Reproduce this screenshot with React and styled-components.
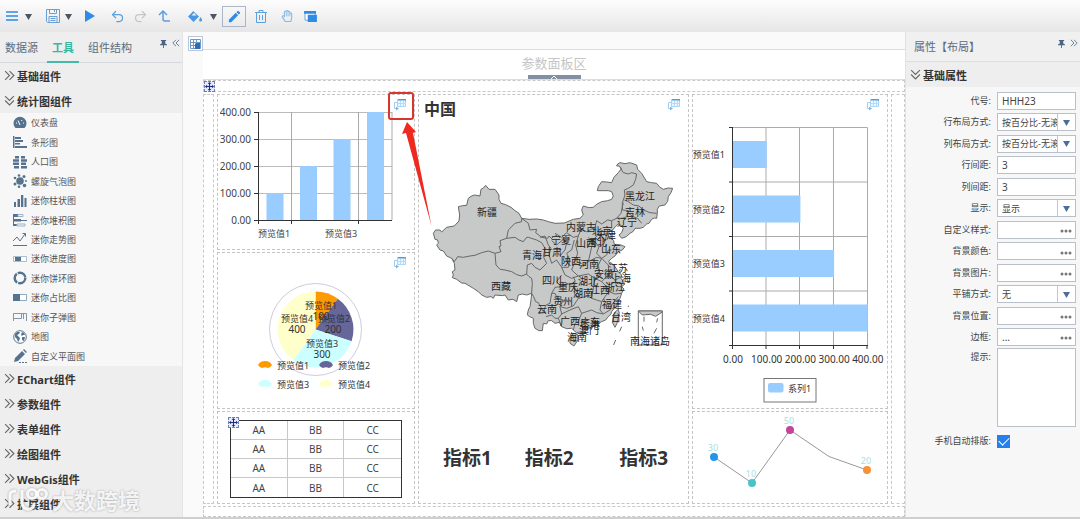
import React, { useState } from "react";
import styled, { createGlobalStyle } from "styled-components";
import { Undo2, Redo2 } from "lucide-react";
import { FaRegHandPaper } from "react-icons/fa";
import { MdEdit } from "react-icons/md";

const GlobalStyle = createGlobalStyle`
  * {
    box-sizing: border-box;
  }
  body {
    margin: 0;
    color: #444;
    background: #f7f7f7;
    font-family: "Noto Sans", "Noto Sans CJK SC", sans-serif;
    font-size: 9px;
  }
  button, input, select, textarea {
    font: inherit;
    color: inherit;
  }
`;

const Page = styled.div`
  position: relative;
  display: flex;
  flex-direction: column;
  min-height: 100vh;
  overflow: hidden;
`;

const Toolbar = styled.header`
  display: flex;
  align-items: center;
  height: 32px;
  padding-left: 3px;
  background: linear-gradient(#fdfdfd, #e6e6e6);
`;

const ToolButton = styled.button`
  display: flex;
  align-items: center;
  justify-content: center;
  width: ${(p) => (p.$boxed ? 24 : p.$caret ? 12 : 18)}px;
  height: 21px;
  margin-left: ${(p) => p.$gap || 0}px;
  padding: 0;
  border: ${(p) => (p.$boxed ? "1px solid #aab6c8" : "none")};
  background: none;
  color: ${(p) => p.$color || "#2f8be6"};
  cursor: pointer;
`;

const Body = styled.div`
  flex: 1;
  display: grid;
  grid-template-columns: 182px 21px minmax(0, 1fr) 175px;
  border-bottom: 2px solid #cfcfcf;
`;

const Sidebar = styled.aside`
  display: flex;
  flex-direction: column;
  height: 485px;
  overflow: hidden;
  background: #eee;
`;

const TabBar = styled.nav`
  display: flex;
  gap: 4px;
  height: 31px;
  flex: none;
  border-bottom: 1px solid #d6dade;
`;

const Tab = styled.button`
  height: 31px;
  padding: 0 5px;
  border: none;
  border-bottom: 2px solid ${(p) => (p.$active ? "#45b9a8" : "transparent")};
  background: none;
  color: ${(p) => (p.$active ? "#36b8a3" : "#5d6b7c")};
  font-size: 11px;
  font-weight: ${(p) => (p.$active ? 700 : 400)};
  cursor: pointer;
`;

const PanelTools = styled.div`
  display: flex;
  align-items: center;
  gap: 5px;
  height: 22px;
  margin-left: auto;
  padding-right: 2px;
  color: #4c6484;
`;

const SectionHead = styled.button`
  display: flex;
  align-items: center;
  gap: 2px;
  flex: none;
  width: 100%;
  height: 25px;
  padding: 0 4px;
  border: none;
  background: #eee;
  color: #333;
  font-size: 11px;
  font-weight: 700;
  text-align: left;
  cursor: pointer;
`;

const ToolList = styled.ul`
  display: grid;
  grid-auto-rows: 1fr;
  flex: none;
  height: 253px;
  margin: 0;
  padding: 0;
  list-style: none;
  background: #f7f7f7;
`;

const ToolItem = styled.li`
  display: flex;
  align-items: center;
  gap: 4px;
  padding-left: 13px;
  color: #555;

  svg {
    color: #55738f;
  }
`;

const Gutter = styled.div`
  display: flex;
  justify-content: flex-end;
  align-items: flex-start;
  padding-top: 4px;
  border-left: 1px solid #e4e4e4;
  background: #fafafa;
`;

const GutterButton = styled.button`
  display: flex;
  align-items: center;
  justify-content: center;
  width: 15px;
  height: 15px;
  padding: 0;
  border: 1px solid #bcc6d6;
  background: #fff;
`;

const Workspace = styled.main`
  display: flex;
  flex-direction: column;
  background: #fff;
`;

const Ruler = styled.div`
  height: 18px;
  border-bottom: 1px solid #ddd;
  background: #fafafa;
`;

const ParamArea = styled.div`
  display: flex;
  flex-direction: column;
  align-items: center;
  justify-content: space-between;
  height: 30px;
  padding-top: 4px;
  border-bottom: 1px solid #ddd;
  color: #c6c6c6;
  font-size: 13px;
  line-height: 18px;
`;

const Handle = styled.button`
  display: flex;
  align-items: center;
  justify-content: center;
  width: 53px;
  height: 4px;
  padding: 0;
  border: none;
  background: #8290a2;
`;

const Canvas = styled.div`
  flex: 1;
  display: grid;
  grid-template-columns: 11px 198fr 271fr 196fr 14px;
  grid-template-rows: 12px auto 11px;
  gap: 2px 3px;
`;

const Slot = styled.div`
  border: 1px dashed #c9c9c9;
  grid-column: ${(p) => (p.$full ? "1 / -1" : "auto")};
`;

const Column = styled.div`
  display: flex;
  flex-direction: column;
  gap: 2px;
  min-width: 0;
`;

const Cell = styled.section`
  position: relative;
  padding: ${(p) => p.$pad || 0}px;
  border: 1px dashed #c4c4c4;
  flex: ${(p) => (p.$grow ? 1 : "none")};
`;

const Chart = styled.svg`
  display: block;
  width: 100%;
  height: auto;
`;

const LinkButton = styled.button`
  position: absolute;
  top: 3px;
  right: ${(p) => p.$right || 6}px;
  width: 15px;
  height: 13px;
  padding: 0;
  border: none;
  background: none;
`;

const MoveGrip = styled.span`
  position: absolute;
  display: flex;
  top: ${(p) => p.$top}px;
  left: ${(p) => p.$left}px;
  border: 1px dashed #6b82b8;
  background: #e6ecfa;
`;

const CanvasHead = styled(Slot)`
  position: relative;
`;

const MapTitle = styled.h2`
  margin: 0;
  padding: 0 5px;
  height: 29px;
  color: #333;
  font-size: 16px;
  line-height: 28px;
`;

const Indicators = styled.div`
  display: grid;
  grid-template-columns: 82fr 95fr 69fr;
  padding-left: 24px;
  color: #333;
  font-size: 19px;
  font-weight: 700;
  line-height: 48px;
`;

const DataTable = styled.table`
  width: 172px;
  margin: 8px 0 5px 12px;
  border: 1px solid #333;
  border-spacing: 0;
  color: #444;
  font-size: 10px;

  td {
    width: 57px;
    height: 19px;
    padding: 0;
    border-right: 1px solid #c8c8c8;
    border-bottom: 1px solid #c8c8c8;
    line-height: 14px;
    text-align: center;
  }
  td:last-child {
    border-right: none;
  }
  tr:last-child td {
    border-bottom: none;
  }
`;

const Properties = styled.aside`
  border-left: 1px solid #e2e2e2;
  background: #f7f7f7;
`;

const PropTitle = styled.div`
  display: flex;
  height: 30px;
  padding-left: 8px;
  border-bottom: 1px solid #ddd;
  background: #f0f0f0;
  color: #5d6b7c;
  font-size: 11px;
  line-height: 30px;
`;

const Form = styled.form`
  padding: 5px 4px 0 0;
`;

const Fields = styled.div`
  display: flex;
  flex-direction: column;
  justify-content: space-between;
  height: 254px;
`;

const FieldRow = styled.div`
  display: grid;
  grid-template-columns: 1fr 79px;
  column-gap: 6px;
  margin-top: ${(p) => p.$gap || 0}px;

  > label {
    color: #444;
    line-height: 18px;
    text-align: right;
  }
`;

const Box = styled.div`
  display: flex;
  height: 18px;
  border: 1px solid #b9c0ca;
  background: #fff;
`;

const TextInput = styled.input`
  flex: 1;
  min-width: 0;
  padding: 0 4px;
  border: none;
  outline: none;
  background: none;
  font-size: 10px;
`;

const Picker = styled.select`
  flex: 1;
  min-width: 0;
  padding: 0 0 0 4px;
  border: none;
  outline: none;
  appearance: none;
  background: none;
`;

const Arrow = styled.span`
  display: flex;
  align-items: center;
  justify-content: center;
  width: 18px;
  border-left: 1px solid #b9c9de;
  color: #4a6f9d;
`;

const MoreButton = styled.button`
  width: 19px;
  padding: 0;
  border: none;
  background: none;
  color: #777;
`;

const Hint = styled.textarea`
  width: 79px;
  height: 79px;
  border: 1px solid #b9c0ca;
  background: #fff;
  resize: none;
`;

const Check = styled.input`
  display: grid;
  place-items: center;
  width: 13px;
  height: 13px;
  margin: 3px 0;
  appearance: none;
  border: 1px solid #2680eb;
  background: #fff;

  &:checked {
    background: #2680eb;
  }
  &:checked::after {
    content: "";
    width: 9px;
    height: 5px;
    margin-bottom: 3px;
    border: solid #fff;
    border-width: 0 0 1px 1px;
    transform: rotate(-45deg);
  }
`;

const Callout = styled.svg`
  position: absolute;
  top: -5px;
  right: -20px;
  width: 48px;
  height: 138px;
  z-index: 2;
  pointer-events: none;
`;

const Watermark = styled.div`
  position: absolute;
  bottom: 4px;
  left: 8px;
  display: flex;
  align-items: center;
  gap: 4px;
  color: rgba(255, 255, 255, 0.9);
  font-size: 22px;
  font-weight: 700;
  line-height: 30px;
  text-shadow: 0 0 2px #999;

  svg {
    filter: drop-shadow(0 0 1px #999);
  }
`;

const Caret = ({ size = 8 }) => (
  <svg width={size} height={size} viewBox="0 0 8 8">
    <path d="M0 1h8L4 8z" fill="currentColor" />
  </svg>
);

const Double = ({ dir = "right", size = 11, color = "#666" }) => {
  const turn = { right: 0, down: 90, left: 180 }[dir];
  return (
    <svg width={size} height={size} viewBox="0 0 10 10">
      <path
        d="M1 1l4 4-4 4M5 1l4 4-4 4"
        transform={`rotate(${turn} 5 5)`}
        fill="none"
        stroke={color}
      />
    </svg>
  );
};

const Pin = () => (
  <svg width="7" height="9" viewBox="0 0 8 10" fill="currentColor">
    <path d="M1 1h6v1H6v3l2 1v1H4.500v3h-1V7H0V6l2-1V2H1z" />
  </svg>
);

const Grip = () => (
  <svg width="9" height="9" viewBox="0 0 10 10" fill="#1b2f86">
    <path d="M5 0l2 2.300H5.600v2.100h2.100V3L10 5 7.700 7V5.600H5.600v2.100H7L5 10 3 7.700h1.400V5.600H2.300V7L0 5l2.300-2v1.400h2.100V2.300H3z" />
  </svg>
);

const LinkIcon = () => (
  <svg width="15" height="13" viewBox="0 0 15 13">
    <path d="M4.500 1.500h8v7h-8z" fill="#eef7ff" stroke="#a9d2f3" />
    <path d="M5 1h8v1.500H5z" fill="#4a9de0" />
    <path d="M5 5.500h8M7.500 3v6M10.500 3v6" stroke="#b5dbf7" />
    <path d="M4 4.500H1.500v6H4" fill="none" stroke="#a2cdf0" />
    <path d="M3 8.500l3 2-3 2z" fill="#7ab8e8" />
  </svg>
);

// sidebar glyphs share a 14x14 box
const glyphs = {
  gauge: (
    <>
      <path d="M2.500 12a6.500 6.500 0 1 1 9 0z" fill="currentColor" />
      <path d="M7 9L5 4.500M3 7h1M10 7h1M9 4l-.5 1" stroke="#fff" />
    </>
  ),
  bars: (
    <path
      d="M0 1h1.500v12H0zM2 2h6v2H2zM2 5h8v2H2zM2 8h5v1.500H2zM2 11h12v2H2z"
      fill="currentColor"
    />
  ),
  people: (
    <path
      d="M2 1h4v2.500H2zM8 1h4v2.500H8zM0 4.300h6v2.500H0zM8 4.300h6v2.500H8zM0 7.600h6V10H0zM8 7.600h5V10H8zM1 11h5v2.500H1zM8 11h6v2.500H8z"
      fill="currentColor"
    />
  ),
  bubble: (
    <g fill="currentColor">
      <circle cx="7" cy="7" r="3.800" />
      <circle cx="2" cy="4" r="1.300" />
      <circle cx="6" cy="1.500" r="1.300" />
      <circle cx="11" cy="2.500" r="1.500" />
      <circle cx="13" cy="7" r="1" />
      <circle cx="11.500" cy="11.500" r="1.800" />
      <circle cx="6" cy="12.700" r="1.300" />
      <circle cx="2" cy="10" r="1.500" />
    </g>
  ),
  columns: (
    <path
      d="M1 8h2v5H1zM4.500 5H7v8H4.500zM8 1h2.300v12H8zM11.500 4h2v9h-2z"
      fill="currentColor"
    />
  ),
  stack: (
    <>
      <path d="M0 1h1v12H0zM1 1h4v3H1zM1 6h7v2.500H1zM1 11h3v2H1zM8 7h6v1H8z" fill="currentColor" />
      <path d="M5 1.500h5v2H5zM4 11h8v2H4z" fill="none" stroke="#9db3c7" />
    </>
  ),
  trend: (
    <path
      d="M0 9l4-4 3 4 5-7M9.500 1.500h3v3M0 13.500h14"
      fill="none"
      stroke="currentColor"
    />
  ),
  progress: (
    <>
      <path d="M.5 4.500h13v5H.5z" fill="#fff" stroke="#a8bdd0" />
      <path d="M2 5h6v4H2z" fill="currentColor" />
    </>
  ),
  ring: (
    <circle cx="7" cy="7" r="5.300" fill="none" stroke="currentColor" strokeWidth="2.400" strokeDasharray="10 1" />
  ),
  ratio: (
    <>
      <path d="M.5 3.500h13v6H.5z" fill="#fff" stroke="#8fa9c0" />
      <path d="M0 3h7v7H0z" fill="currentColor" />
    </>
  ),
  bullet: (
    <path
      d="M.5 11V3.500h13V11M.5 8.500h8M8.500 3.500v5M10.500 4v5"
      fill="none"
      stroke="#8097ad"
    />
  ),
  globe: (
    <>
      <circle cx="7" cy="7" r="6.300" fill="#fff" stroke="currentColor" />
      <path d="M2 4l2-2 3 0-1 2-2 1 2 2 1 1-1 3-1 1-1-3-2-2zM9 2l2 1 1 2-2 0-1 1-1-1zM9 7l3 0-1 4-2-1z" fill="currentColor" />
    </>
  ),
  draw: (
    <>
      <path d="M2 9l7-7 3 3-7 7-4 1zM10 1l1-1 3 3-1 1z" fill="currentColor" />
      <path d="M6 13.500h8" stroke="currentColor" strokeDasharray="2 1" />
    </>
  ),
};

const tools = [
  ["gauge", "仪表盘"],
  ["bars", "条形图"],
  ["people", "人口图"],
  ["bubble", "螺旋气泡图"],
  ["columns", "迷你柱状图"],
  ["stack", "迷你堆积图"],
  ["trend", "迷你走势图"],
  ["progress", "迷你进度图"],
  ["ring", "迷你饼环图"],
  ["ratio", "迷你占比图"],
  ["bullet", "迷你子弹图"],
  ["globe", "地图"],
  ["draw", "自定义平面图"],
];

const closedSections = [
  "EChart组件",
  "参数组件",
  "表单组件",
  "绘图组件",
  "WebGis组件",
  "扩展组件",
];

const fields = [
  { id: "code", label: "代号", type: "text", value: "HHH23" },
  { id: "rowLayout", label: "行布局方式", type: "select", value: "按百分比-无滚动" },
  { id: "colLayout", label: "列布局方式", type: "select", value: "按百分比-无滚动" },
  { id: "rowGap", label: "行间距", type: "text", value: "3" },
  { id: "colGap", label: "列间距", type: "text", value: "3" },
  { id: "display", label: "显示", type: "select", value: "显示" },
  { id: "style", label: "自定义样式", type: "more", value: "" },
  { id: "bgColor", label: "背景颜色", type: "more", value: "" },
  { id: "bgImage", label: "背景图片", type: "more", value: "" },
  { id: "tile", label: "平铺方式", type: "select", value: "无" },
  { id: "bgPos", label: "背景位置", type: "more", value: "" },
  { id: "border", label: "边框", type: "more", value: "..." },
];

const ColumnChart = () => (
  <Chart viewBox="220 97 192 150" fontSize="10" fill="#444">
    {[0, 1, 2, 3, 4].map((i) => (
      <g key={i}>
        <path d={`M258 ${220.5 - i * 27}H392`} stroke="#bbb" />
        <path d={`M254 ${220.5 - i * 27}h4`} stroke="#333" />
        <text x="251" y={224 - i * 27} textAnchor="end">
          {i * 100}.00
        </text>
      </g>
    ))}
    <path d="M291.500 112v108M358.500 112v108M392 112v108" stroke="#aaa" />
    {[1, 2, 3, 4].map((v, i) => (
      <rect key={v} x={266.5 + i * 33.5} y={220 - v * 27} width="17" height={v * 27} fill="#9cf" />
    ))}
    <path d="M258.500 112v112M258 220.500h134M291.500 220v4M358.500 220v4" stroke="#333" fill="none" />
    <g fontSize="9" textAnchor="middle">
      <text x="274" y="237">预览值1</text>
      <text x="341" y="237">预览值3</text>
    </g>
  </Chart>
);

const legendItems = [
  ["预览值1", "#f90", 265, 365],
  ["预览值2", "#669", 326, 365],
  ["预览值3", "#cff", 265, 384],
  ["预览值4", "#ffc", 326, 384],
];

const PieChart = () => (
  <Chart viewBox="220 255 192 151" fontSize="9" fill="#333">
    <circle cx="315.500" cy="329.500" r="46" fill="#fff" stroke="#ccd" />
    <path d="M315.500 329.500V291.500A38 38 0 0 1 337.800 298.800z" fill="#f90" />
    <path d="M315.500 329.500L337.800 298.800A38 38 0 0 1 351.600 341.200z" fill="#669" />
    <path d="M315.500 329.500L351.600 341.200A38 38 0 0 1 293.200 360.200z" fill="#cff" />
    <path d="M315.500 329.500L293.200 360.200A38 38 0 0 1 315.500 291.500z" fill="#ffc" />
    <g textAnchor="middle">
      <text x="321" y="309">预览值1</text>
      <text x="321" y="320" fontSize="10">100</text>
      <text x="334" y="322">预览值2</text>
      <text x="333" y="333" fontSize="10">200</text>
      <text x="322" y="347">预览值3</text>
      <text x="322" y="358" fontSize="10">300</text>
      <text x="297" y="322">预览值4</text>
      <text x="297" y="333" fontSize="10">400</text>
    </g>
    {legendItems.map(([label, color, x, y]) => (
      <g key={label}>
        <path
          d={`M${x - 7} ${y}q2-4 7-4t7 4q-2 3-4 3-3-1.500-6 0-2 0-4-3z`}
          fill={color}
        />
        <text x={x + 12} y={y + 4}>{label}</text>
      </g>
    ))}
  </Chart>
);

const BarChart = () => (
  <Chart viewBox="693 95 194 313" fontSize="9" fill="#333">
    <path d="M732 127.500h135.500V345M732 182h135M732 236.500h135M732 291h135M766 127v218M799.500 127v218M833.500 127v218" stroke="#aaa" fill="none" />
    {[1, 2, 3, 4].map((v, i) => (
      <g key={v}>
        <rect x="733" y={141 + i * 54.5} width={v * 33.7} height="27" fill="#9cf" />
        <text x="725" y={158 + i * 54.5} textAnchor="end">预览值{v}</text>
      </g>
    ))}
    <path d="M732.500 127v222M729 345.500h139M729 127.500h3M729 182h3M729 236.500h3M729 291h3M766 345v4M799.500 345v4M833.500 345v4M867 345v4" stroke="#333" fill="none" />
    {[0, 1, 2, 3, 4].map((v) => (
      <text key={v} x={733 + v * 33.7} y="363" textAnchor="middle" fontSize="10">
        {v * 100}.00
      </text>
    ))}
    <rect x="764" y="378.500" width="52" height="23.500" fill="#fff" stroke="#777" />
    <rect x="768" y="383" width="15.500" height="9.500" rx="2" fill="#9cf" />
    <text x="788" y="392">系列1</text>
  </Chart>
);

const points = [
  [714, 457, 30, "#2196e8"],
  [752, 483, 10, "#48c3c8"],
  [790, 430, 50, "#c4449c"],
  [867, 470, 20, "#f5923a"],
];

const LineChart = () => (
  <Chart viewBox="693 412 194 88" fontSize="9" textAnchor="middle">
    <path d="M714 457L752 483 790 430 829 456.500 867 470" fill="none" stroke="#999" />
    {points.map(([x, y, v, color]) => (
      <g key={v}>
        <circle cx={x} cy={y} r="4" fill={color} />
        <text x={x - 1} y={y - 6} fill="#a5dfe6">{v}</text>
      </g>
    ))}
  </Chart>
);

// outline and borders are drawn at three times the label coordinates
const country =
  "M55 250L62 240 75 240 80 246 95 232 118 228 132 213 134 195 130 170 143 167 155 166 160 145 168 139 178 135 195 138 198 118 205 114 212 106 222 118 240 118 252 135 252 148 258 160 272 164 288 172 300 182 312 190 320 205 342 208 365 207 385 210 400 215 420 220 448 219 475 208 495 205 505 195 500 180 505 168 522 173 535 172 545 163 560 155 578 152 590 148 595 138 590 125 580 122 547 122 550 110 560 95 575 96 590 98 597 82 610 68 620 55 612 48 605 48 608 42 615 38 630 41 645 38 665 45 668 58 680 70 695 95 710 98 725 100 733 110 745 118 760 114 773 115 768 128 760 140 758 154 750 165 733 168 727 178 727 190 725 205 718 204 710 208 702 220 695 222 685 232 675 235 660 235 655 244 645 250 634 260 620 265 612 255 620 248 625 235 618 226 610 222 602 229 593 240 585 243 580 250 582 262 590 265 596 272 598 284 606 283 618 285 630 290 622 300 610 305 600 318 590 325 580 335 592 341 600 350 610 365 620 375 618 385 625 395 630 402 620 410 627 417 620 430 615 445 608 458 605 470 598 475 590 485 587 494 580 500 572 510 560 515 540 525 530 532 520 535 510 545 500 545 484 548 470 535 455 536 440 530 433 517 420 520 410 512 400 512 395 522 385 520 382 542 372 542 360 535 355 520 355 505 344 500 337 495 340 480 345 470 348 450 350 430 335 435 322 432 310 435 305 455 294 448 280 450 270 435 262 437 240 435 235 445 228 440 215 442 200 435 190 425 175 415 150 400 140 399 125 388 112 383 115 375 112 365 120 360 118 340 110 325 95 318 85 303 75 300 65 285 70 280 68 270 60 268z";

const borders = [
  "M110 325L118 335 128 320 145 322 165 318 180 316 200 308 220 303 240 310",
  "M240 310L243 345 255 358 270 360 290 365 305 374 320 378 335 372 342 380 350 385 352 400 350 430",
  "M240 310L258 305 252 290 258 288 255 272 275 265 280 240 300 220 320 215 320 205 340 220 345 240 365 238 362 248 380 262 398 265 402 258 412 268",
  "M275 265L300 262 312 270 325 275 335 262 340 262 365 270 380 278 390 295 385 320 395 340 375 360 360 352 350 340 337 345 335 372",
  "M350 430L356 440 362 455 370 458 385 485 393 465 405 460 410 430 420 430 432 455 445 450",
  "M375 262L390 258 400 285 408 295 402 315 410 340 425 330 440 352 460 352 465 330 455 310 470 300 478 270",
  "M410 272L425 285 445 268 455 278 450 300 435 318M420 250L440 262 455 248 475 262 490 258 498 238 515 245 540 232",
  "M490 258L482 285 488 310 478 340 500 348 520 335 528 300 535 270 548 255",
  "M520 335L545 322 560 325 575 315 580 300 590 300M535 270L552 290 545 310 560 325",
  "M540 232L545 212 560 222 578 210 590 212 590 235M548 255L560 240 575 255 568 280 552 290",
  "M478 340L470 360 490 378 520 372 540 385 555 372 550 345 560 325M560 325L580 345 582 375 600 390 620 380",
  "M440 352L450 375 470 385 490 378M440 375L425 395 440 410 455 400 470 405 480 392 475 380",
  "M480 392L478 430 490 445 520 438 530 445 540 385M540 385L560 395 572 382 582 375M560 395L575 410 582 425 570 440 560 455 545 450 530 445",
  "M445 450L435 470 455 475 475 468 490 445M410 430L420 412 440 410M435 470L440 492 430 505 440 530",
  "M440 492L465 480 490 470 500 490 490 515 480 520 475 540M500 490L530 480 545 488 565 492 585 480 590 465 610 440",
  "M565 492L555 480 560 455M582 425L600 432 620 430M600 390L605 410 620 410M393 500L410 495 420 505 430 505",
  "M615 52L625 68 640 72 650 68 665 72 662 88 655 105 640 115 628 120 630 135 625 150 622 158 622 180 640 182 640 190 655 200 668 205 680 220",
  "M628 150L640 155 655 165 672 168 685 180 705 188 725 190M590 212L605 205 622 205 635 200 640 182M625 158L618 190 605 205",
];

const provinces = [
  ["新疆", 487, 213], ["西藏", 501, 287], ["青海", 532, 256], ["四川", 552, 281],
  ["云南", 547, 310], ["内蒙古", 581, 228], ["黑龙江", 640, 197], ["吉林", 635, 213],
  ["辽宁", 627, 223], ["宁夏", 561, 241], ["甘肃", 552, 253], ["陕西", 571, 262],
  ["山西", 586, 244], ["河北", 597, 243], ["北京", 602, 232], ["天津", 606, 236],
  ["山东", 611, 250], ["河南", 589, 265], ["江苏", 618, 269], ["安徽", 604, 275],
  ["上海", 621, 279], ["湖北", 588, 282], ["重庆", 568, 288], ["浙江", 615, 288],
  ["湖南", 583, 294], ["江西", 600, 291], ["贵州", 563, 302], ["福建", 612, 305],
  ["台湾", 621, 318], ["广西", 570, 322], ["广东", 590, 323], ["香港", 590, 326],
  ["澳门", 589, 331], ["海南", 577, 338], ["南海诸岛", 650, 342],
];

const ChinaMap = () => (
  <Chart viewBox="419 124 269 310" fontSize="10" fill="#222">
    <g transform="translate(415 150) scale(.3333)" fill="#c7c8c8" stroke="#666" strokeWidth="3" strokeLinejoin="round">
      <path d={country} />
      <path d="M465 560l12-10 12 5 0 15-12 18-12-8z" />
      <path d="M598 488l12-10 3 12-7 30-6 12-8-15z" />
      <g fill="none">
        {borders.map((d) => (
          <path key={d} d={d} />
        ))}
        <path d="M670 483h72v102h-72z" />
        <path d="M670 483l12 12 25-2 15 6 20-13V483z" fill="#c7c8c8" />
        <path d="M687 500v15M682 530l3 12M728 505l-3 12M725 535l-8 15M620 530l-6 14M602 570l-6 15M640 467v4" />
      </g>
    </g>
    <g textAnchor="middle">
      {provinces.map(([name, x, y]) => (
        <text key={name} x={x} y={y + 3}>{name}</text>
      ))}
    </g>
  </Chart>
);

const Link = ({ right }) => (
  <LinkButton type="button" aria-label="联动" $right={right}>
    <LinkIcon />
  </LinkButton>
);

const TopToolbar = () => (
  <Toolbar>
    <ToolButton aria-label="菜单">
      <svg width="14" height="12" viewBox="0 0 14 12">
        <path d="M1 2h12M1 6h12M1 10h12" stroke="currentColor" strokeWidth="1.500" />
      </svg>
    </ToolButton>
    <ToolButton $caret $gap={1} $color="#4b5563" aria-label="更多菜单"><Caret size={7} /></ToolButton>
    <ToolButton $gap={10} $color="#6a9fd6" aria-label="保存">
      <svg width="14" height="14" viewBox="0 0 14 14" fill="none" stroke="currentColor">
        <path d="M.5 .5h13v13H1.500l-1-1z" />
        <path d="M3.500 .5v4h7v-4M3 13.500v-6h8v6M4.500 9.500h5M4.500 11.500h5M8.500 1v2" />
      </svg>
    </ToolButton>
    <ToolButton $caret $color="#4b5563" aria-label="保存选项"><Caret size={7} /></ToolButton>
    <ToolButton $gap={6} aria-label="运行">
      <svg width="11" height="12" viewBox="0 0 11 12">
        <path d="M1 0l10 6-10 6z" fill="currentColor" />
      </svg>
    </ToolButton>
    <ToolButton $gap={10} $color="#5b9fe0" aria-label="撤销"><Undo2 size={15} strokeWidth={2} /></ToolButton>
    <ToolButton $gap={5} $color="#c2c6ca" aria-label="重做"><Redo2 size={15} strokeWidth={2} /></ToolButton>
    <ToolButton $gap={6} $color="#5b9fe0" aria-label="返回上级">
      <svg width="14" height="14" viewBox="0 0 14 14" fill="none" stroke="currentColor" strokeWidth="1.500">
        <path d="M2 6l4-4 4 4M6 2v8q0 2 2 2h5" />
      </svg>
    </ToolButton>
    <ToolButton $gap={13} $color="#4a98e2" aria-label="填充">
      <svg width="14" height="13" viewBox="0 0 14 13">
        <path d="M5 1l6 5.500L5.500 12 0 6.500 4 2.500z" fill="currentColor" />
        <path d="M3.500 5.500h5L6 3z" fill="#f4f4f4" />
        <path d="M12.500 7q3 4 0 4.500-2.500-.5 0-4.500z" fill="currentColor" />
      </svg>
    </ToolButton>
    <ToolButton $caret $gap={3} $color="#4b5563" aria-label="填充选项"><Caret size={7} /></ToolButton>
    <ToolButton $boxed $gap={3} aria-label="编辑"><MdEdit size={15} /></ToolButton>
    <ToolButton $gap={6} $color="#5ba0e0" aria-label="删除">
      <svg width="12" height="13" viewBox="0 0 12 13" fill="none" stroke="currentColor">
        <path d="M0 2.500h12M4 2V.5h4V2M1.500 3v9.500h9V3M4.500 5v5M7.500 5v5" />
      </svg>
    </ToolButton>
    <ToolButton $gap={8} $color="#8ab9e6" aria-label="拖动"><FaRegHandPaper size={12} /></ToolButton>
    <ToolButton $gap={5} aria-label="窗口">
      <svg width="13" height="11" viewBox="0 0 14 12">
        <path d="M1 1h11v9H1z" fill="#fff" stroke="#5ba0e0" />
        <path d="M0 0h13v3H0zM4 4h10v8H4z" fill="currentColor" />
      </svg>
    </ToolButton>
  </Toolbar>
);

const LeftPanel = () => {
  const [tab, setTab] = useState("工具");
  return (
    <Sidebar>
      <TabBar>
        {["数据源", "工具", "组件结构"].map((name) => (
          <Tab key={name} $active={tab === name} onClick={() => setTab(name)}>
            {name}
          </Tab>
        ))}
        <PanelTools>
          <Pin />
          <Double dir="left" size={8} color="#4c6484" />
        </PanelTools>
      </TabBar>
      <SectionHead><Double />基础组件</SectionHead>
      <SectionHead><Double dir="down" />统计图组件</SectionHead>
      <ToolList>
        {tools.map(([icon, name]) => (
          <ToolItem key={name}>
            <svg width="14" height="14" viewBox="0 0 14 14">{glyphs[icon]}</svg>
            {name}
          </ToolItem>
        ))}
      </ToolList>
      {closedSections.map((name) => (
        <SectionHead key={name}><Double />{name}</SectionHead>
      ))}
    </Sidebar>
  );
};

const Field = ({ id, label, type, value }) => (
  <FieldRow>
    <label htmlFor={id}>{label}:</label>
    <Box>
      {type === "select" ? (
        <>
          <Picker id={id} defaultValue={value}>
            <option value={value}>{value}</option>
          </Picker>
          <Arrow><Caret size={7} /></Arrow>
        </>
      ) : (
        <TextInput id={id} defaultValue={value} />
      )}
      {type === "more" && (
        <MoreButton type="button" aria-label={`设置${label}`}>
          <svg width="12" height="4" viewBox="0 0 12 4" fill="currentColor">
            <circle cx="2" cy="2" r="1.500" />
            <circle cx="6" cy="2" r="1.500" />
            <circle cx="10" cy="2" r="1.500" />
          </svg>
        </MoreButton>
      )}
    </Box>
  </FieldRow>
);

const RightPanel = () => (
  <Properties>
    <PropTitle>
      属性【布局】
      <PanelTools>
        <Pin />
        <Double size={8} color="#4c6484" />
      </PanelTools>
    </PropTitle>
    <SectionHead><Double dir="down" />基础属性</SectionHead>
    <Form>
      <Fields>
        {fields.map((f) => (
          <Field key={f.id} {...f} />
        ))}
      </Fields>
      <FieldRow $gap={2}>
        <label htmlFor="hint">提示:</label>
        <Hint id="hint" />
      </FieldRow>
      <FieldRow $gap={5}>
        <label htmlFor="mobile">手机自动排版:</label>
        <Check id="mobile" type="checkbox" defaultChecked />
      </FieldRow>
    </Form>
  </Properties>
);

const App = () => (
  <Page>
    <GlobalStyle />
    <TopToolbar />
    <Body>
      <LeftPanel />
      <Gutter>
        <GutterButton aria-label="网格">
          <svg width="11" height="11" viewBox="0 0 11 11">
            <path d="M.5 1.500h10v9H.5zM.5 4.500h10M.5 7.500h10M3.500 1v9M6.500 1v9" fill="none" stroke="#6d9bc8" />
            <path d="M6 5h4v6H5V6z" fill="#2d6db3" />
          </svg>
        </GutterButton>
      </Gutter>
      <Workspace>
        <Ruler />
        <ParamArea>
          参数面板区
          <Handle aria-label="收起参数面板">
            <svg width="8" height="4" viewBox="0 0 8 4">
              <path d="M1 4l3-3 3 3" fill="none" stroke="#fff" />
            </svg>
          </Handle>
        </ParamArea>
        <Canvas>
          <CanvasHead $full>
            <MoveGrip $top={0} $left={0}><Grip /></MoveGrip>
          </CanvasHead>
          <Slot />
          <Column>
            <Cell $pad={2}>
              <ColumnChart />
              <Link right={6} />
              <Callout viewBox="386 90 48 138">
                <rect x="389" y="93" width="24" height="26" rx="2" fill="none" stroke="#d8352c" strokeWidth="2" />
                <path d="M407 122l9 10-3 1 18.500 93-25.500-93-4 1z" fill="#ee2a20" />
              </Callout>
            </Cell>
            <Cell $pad={2}>
              <PieChart />
              <Link right={6} />
            </Cell>
            <Cell $grow>
              <DataTable>
                <tbody>
                  {[1, 2, 3, 4].map((r) => (
                    <tr key={r}>
                      <td>AA</td>
                      <td>BB</td>
                      <td>CC</td>
                    </tr>
                  ))}
                </tbody>
              </DataTable>
              <MoveGrip $top={5} $left={10}><Grip /></MoveGrip>
            </Cell>
          </Column>
          <Cell>
            <MapTitle>中国</MapTitle>
            <ChinaMap />
            <Indicators>
              <span>指标1</span>
              <span>指标2</span>
              <span>指标3</span>
            </Indicators>
            <Link right={6} />
          </Cell>
          <Column>
            <Cell>
              <BarChart />
              <Link right={6} />
            </Cell>
            <Cell $grow>
              <LineChart />
            </Cell>
          </Column>
          <Slot />
          <Slot $full />
        </Canvas>
      </Workspace>
      <RightPanel />
    </Body>
    <Watermark>
      <svg width="40" height="26" viewBox="0 0 40 26" fill="none" stroke="rgba(255,255,255,.9)" strokeWidth="3">
        <path d="M2 18V8q0-4 6-4" />
        <circle cx="24" cy="7" r="4.500" />
        <circle cx="34" cy="7" r="4.500" />
        <path d="M14 3v13q1 7 8 6 4-1 4-6" />
      </svg>
      大数跨境
    </Watermark>
  </Page>
);

export default App;
